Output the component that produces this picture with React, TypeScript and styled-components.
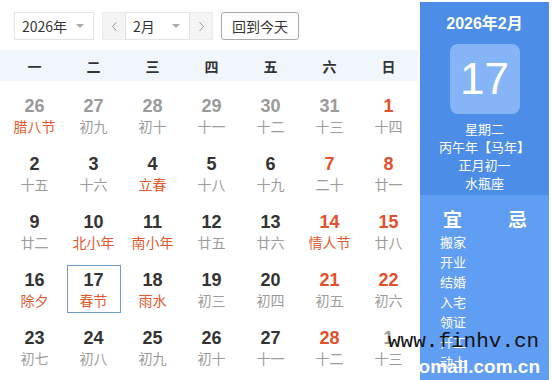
import React from "react";
import styled, { createGlobalStyle } from "styled-components";

const Global = createGlobalStyle`
  html, body { margin: 0; padding: 0; background: #fff; }
  body { font-family: "Liberation Sans", "Noto Sans CJK SC", sans-serif; }
`;

const CJK = `"Noto Sans CJK SC", "Liberation Sans", sans-serif`;
const NUM = `"Liberation Sans", "Noto Sans CJK SC", sans-serif`;

const Page = styled.div`
  position: relative;
  width: 552px;
  height: 380px;
  overflow: hidden;
  display: flex;
  align-items: flex-start;
`;

const Main = styled.div`
  width: 418px;
  flex: none;
  margin-right: 2px;
`;

const Toolbar = styled.div`
  display: flex;
  align-items: center;
  gap: 8px;
  padding: 12px 0 0 14px;
  height: 28px;
`;

const Select = styled.div<{ $w: number }>`
  box-sizing: border-box;
  width: ${(p) => p.$w}px;
  height: 28px;
  border: 1px solid #e4e4e4;
  background: #fff;
  display: flex;
  align-items: center;
  justify-content: space-between;
  padding: 0 9px 0 7px;
  font: 14px ${CJK};
  color: #333;
`;

const Caret = styled.span`
  width: 0;
  height: 0;
  border-left: 4px solid transparent;
  border-right: 4px solid transparent;
  border-top: 4px solid #aaa;
`;

const Group = styled.div`
  display: flex;
  height: 28px;
`;

const Arrow = styled.div<{ $side: "l" | "r" }>`
  box-sizing: border-box;
  width: 23px;
  height: 28px;
  background: #f4f4f4;
  border: 1px solid #ececec;
  ${(p) => (p.$side === "l" ? "border-right: none;" : "border-left: none;")}
  display: flex;
  align-items: center;
  justify-content: center;
`;

const TodayBtn = styled.div`
  box-sizing: border-box;
  width: 78px;
  height: 28px;
  border: 1px solid #a9a9a9;
  border-radius: 3px;
  display: flex;
  align-items: center;
  justify-content: center;
  font: 14px ${CJK};
  color: #333;
`;

const WeekHead = styled.div`
  margin-top: 10px;
  height: 31px;
  background: #f1f6fd;
  display: grid;
  grid-template-columns: repeat(7, 59px);
  padding-left: 5px;
  align-items: center;
`;

const WeekDay = styled.div`
  text-align: center;
  font: bold 14px ${CJK};
  color: #333;
`;

const Grid = styled.div`
  display: grid;
  grid-template-columns: repeat(7, 59px);
  grid-auto-rows: 48px;
  row-gap: 10px;
  padding: 10px 0 0 5px;
`;

const Cell = styled.div<{ $sel?: boolean }>`
  box-sizing: border-box;
  width: 54px;
  height: 48px;
  justify-self: center;
  border: 1px solid ${(p) => (p.$sel ? "#6d9ccf" : "transparent")};
  display: flex;
  flex-direction: column;
  align-items: center;
  padding-top: 4px;
`;

const DayNum = styled.div<{ $tone: "dim" | "red" | "norm" }>`
  font: bold 18px/20px ${NUM};
  color: ${(p) => (p.$tone === "dim" ? "#9a9a9a" : p.$tone === "red" ? "#e4502a" : "#333")};
`;

const Lunar = styled.div<{ $fest?: boolean }>`
  font: 14px/20px ${CJK};
  color: ${(p) => (p.$fest ? "#e3582c" : "#9c9c9c")};
  white-space: nowrap;
`;

const Side = styled.div`
  width: 129px;
  flex: none;
  margin-top: 2px;
  height: 378px;
  display: flex;
  flex-direction: column;
  color: #fff;
`;

const SideTop = styled.div`
  background: #4c8de8;
  height: 193px;
  display: flex;
  flex-direction: column;
  align-items: center;
  padding-top: 12px;
  box-sizing: border-box;
`;

const SideTitle = styled.div`
  font: bold 16px/20px ${NUM};
`;

const BigBox = styled.div`
  margin-top: 10px;
  width: 70px;
  height: 70px;
  border-radius: 8px;
  background: #86b5f7;
  display: flex;
  align-items: center;
  justify-content: center;
  font: 44px ${NUM};
`;

const Info = styled.div`
  margin-top: 6px;
  font: 13px/18px ${CJK};
  text-align: center;
`;

const SideBottom = styled.div`
  flex: 1;
  background: #5f9ef3;
  padding: 12px 0 0 20px;
`;

const YiJi = styled.div`
  display: flex;
  gap: 46px;
  padding-left: 3px;
  font: bold 19px/24px ${CJK};
`;

const YiList = styled.div`
  margin-top: 1px;
  font: 13px/20px ${CJK};
`;

const WmDark = styled.div`
  position: absolute;
  left: 388px;
  top: 330px;
  font: 21px/24px "Liberation Mono", monospace;
  color: #111;
  white-space: nowrap;
`;

const WmLight = styled.div`
  position: absolute;
  left: 408px;
  top: 355px;
  font: bold 19px/24px "Liberation Sans", sans-serif;
  color: #fff;
  white-space: nowrap;
`;

type Day = { n: number; l: string; dim?: boolean; red?: boolean; fest?: boolean; sel?: boolean };

const days: Day[] = [
  { n: 26, l: "腊八节", dim: true, fest: true },
  { n: 27, l: "初九", dim: true },
  { n: 28, l: "初十", dim: true },
  { n: 29, l: "十一", dim: true },
  { n: 30, l: "十二", dim: true },
  { n: 31, l: "十三", dim: true },
  { n: 1, l: "十四", red: true },
  { n: 2, l: "十五" },
  { n: 3, l: "十六" },
  { n: 4, l: "立春", fest: true },
  { n: 5, l: "十八" },
  { n: 6, l: "十九" },
  { n: 7, l: "二十", red: true },
  { n: 8, l: "廿一", red: true },
  { n: 9, l: "廿二" },
  { n: 10, l: "北小年", fest: true },
  { n: 11, l: "南小年", fest: true },
  { n: 12, l: "廿五" },
  { n: 13, l: "廿六" },
  { n: 14, l: "情人节", red: true, fest: true },
  { n: 15, l: "廿八", red: true },
  { n: 16, l: "除夕", fest: true },
  { n: 17, l: "春节", fest: true, sel: true },
  { n: 18, l: "雨水", fest: true },
  { n: 19, l: "初三" },
  { n: 20, l: "初四" },
  { n: 21, l: "初五", red: true },
  { n: 22, l: "初六", red: true },
  { n: 23, l: "初七" },
  { n: 24, l: "初八" },
  { n: 25, l: "初九" },
  { n: 26, l: "初十" },
  { n: 27, l: "十一" },
  { n: 28, l: "十二", red: true },
  { n: 1, l: "十三", dim: true },
];

const Chevron = ({ dir }: { dir: "l" | "r" }) => (
  <svg width="7" height="11" viewBox="0 0 7 11">
    <path
      d={dir === "l" ? "M5.5 1 L1.5 5.5 L5.5 10" : "M1.5 1 L5.5 5.5 L1.5 10"}
      fill="none"
      stroke="#999"
      strokeWidth="1"
    />
  </svg>
);

export default function App() {
  return (
    <>
      <Global />
      <Page>
        <Main>
          <Toolbar>
            <Select $w={80}>
              <span>2026年</span>
              <Caret />
            </Select>
            <Group>
              <Arrow $side="l">
                <Chevron dir="l" />
              </Arrow>
              <Select $w={65}>
                <span>2月</span>
                <Caret />
              </Select>
              <Arrow $side="r">
                <Chevron dir="r" />
              </Arrow>
            </Group>
            <TodayBtn>回到今天</TodayBtn>
          </Toolbar>
          <WeekHead>
            {["一", "二", "三", "四", "五", "六", "日"].map((w) => (
              <WeekDay key={w}>{w}</WeekDay>
            ))}
          </WeekHead>
          <Grid>
            {days.map((d, i) => (
              <Cell key={i} $sel={d.sel}>
                <DayNum $tone={d.dim ? "dim" : d.red ? "red" : "norm"}>{d.n}</DayNum>
                <Lunar $fest={d.fest}>{d.l}</Lunar>
              </Cell>
            ))}
          </Grid>
        </Main>
        <Side>
          <SideTop>
            <SideTitle>2026年2月</SideTitle>
            <BigBox>17</BigBox>
            <Info>
              星期二
              <br />
              丙午年【马年】
              <br />
              正月初一
              <br />
              水瓶座
            </Info>
          </SideTop>
          <SideBottom>
            <YiJi>
              <span>宜</span>
              <span>忌</span>
            </YiJi>
            <YiList>
              {["搬家", "开业", "结婚", "入宅", "领证", "开工", "动土"].map((t) => (
                <div key={t}>{t}</div>
              ))}
            </YiList>
          </SideBottom>
        </Side>
        <WmDark>www.finhv.cn</WmDark>
        <WmLight>somall.com.cn</WmLight>
      </Page>
    </>
  );
}
